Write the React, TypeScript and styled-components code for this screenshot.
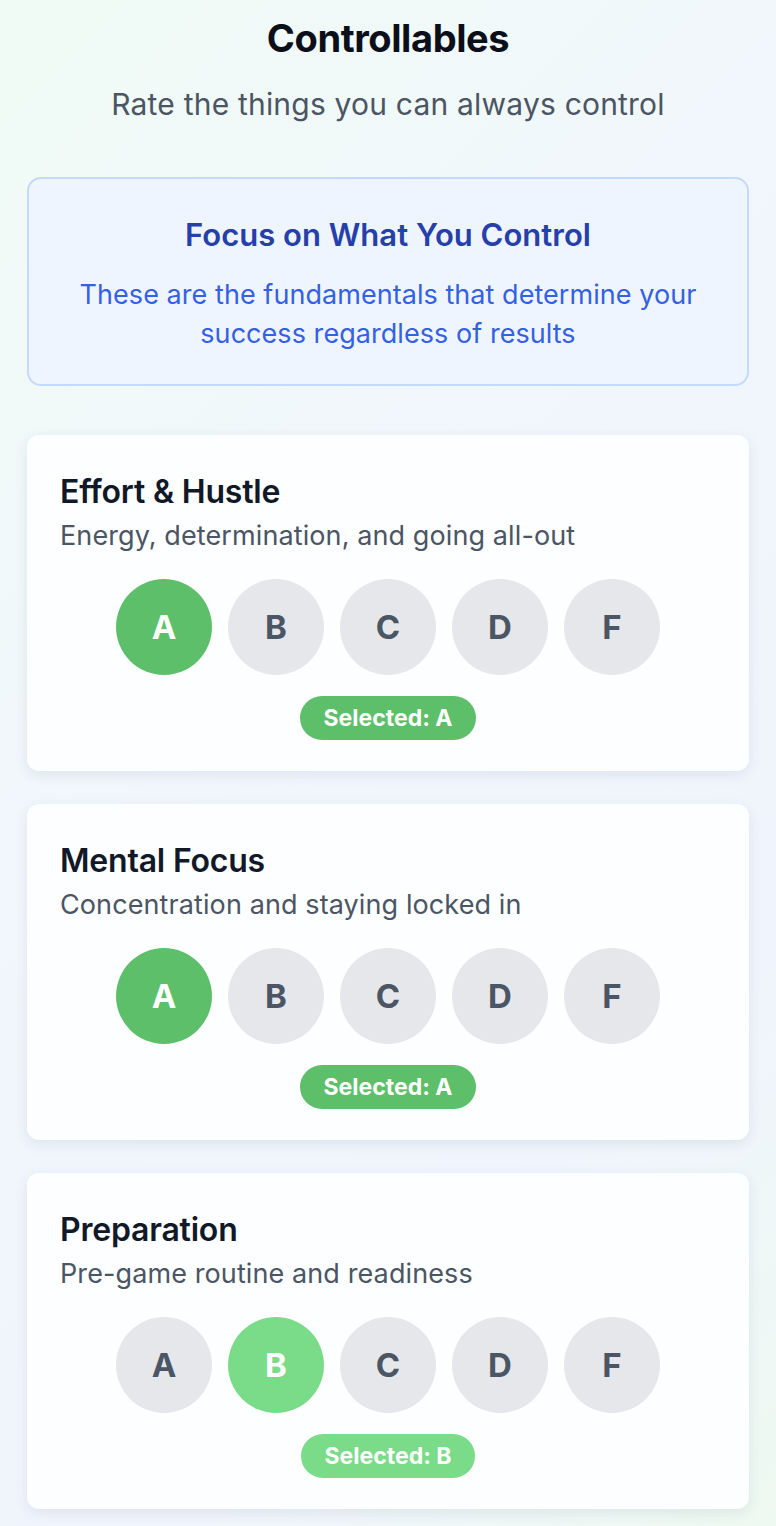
import styled, { createGlobalStyle } from "styled-components";

const GlobalStyle = createGlobalStyle`
  html, body {
    margin: 0;
    padding: 0;
  }
  body {
    font-family: Inter, "Noto Sans", "Liberation Sans", sans-serif;
    background: linear-gradient(135deg, #f0fbf5 0%, #f1f6fd 45%, #f0f5fd 75%, #eef9f1 100%);
    min-height: 100vh;
  }
`;

const Page = styled.div`
  padding: 16px 27px 16px;
  display: flex;
  flex-direction: column;
`;

const Header = styled.header`
  display: flex;
  flex-direction: column;
  align-items: center;
  margin-bottom: 53px;
`;

const Title = styled.h1`
  margin: 0;
  font-size: 38px;
  line-height: 44px;
  font-weight: 700;
  color: #0b0f1a;
  letter-spacing: -0.4px;
`;

const Subtitle = styled.p`
  margin: 24px 0 0;
  font-size: 30px;
  line-height: 40px;
  color: #4b5563;
  letter-spacing: 0.2px;
`;

const InfoBox = styled.section`
  background: #eff5fe;
  border: 2px solid #c4dafc;
  border-radius: 14px;
  padding: 32px 30px 31px;
  text-align: center;
  margin-bottom: 49px;
`;

const InfoTitle = styled.h2`
  margin: 0;
  font-size: 31px;
  line-height: 48px;
  font-weight: 600;
  color: #2540a8;
`;

const InfoText = styled.p`
  margin: 16px 0 0;
  font-size: 27px;
  line-height: 39px;
  color: #3461e3;
  letter-spacing: 0.05px;
`;

const CardList = styled.div`
  display: flex;
  flex-direction: column;
  gap: 33px;
`;

const Card = styled.section`
  background: #fdfeff;
  border-radius: 12px;
  box-shadow: 0 4px 14px rgba(30, 50, 80, 0.09);
  padding: 33px 33px 31px;
  display: flex;
  flex-direction: column;
`;

const CardTitle = styled.h3`
  margin: 0;
  font-size: 32px;
  line-height: 48px;
  font-weight: 600;
  color: #111827;
  letter-spacing: -0.2px;
`;

const CardDesc = styled.p`
  margin: 2px 0 0;
  font-size: 27px;
  line-height: 36px;
  color: #4b5563;
  letter-spacing: 0.1px;
`;

const Grades = styled.div`
  display: flex;
  justify-content: center;
  gap: 16px;
  margin-top: 25px;
`;

type Tone = "strong" | "light";

const toneColor: Record<Tone, string> = {
  strong: "#5ebf6a",
  light: "#7adb88",
};

const GradeButton = styled.button<{ $active: boolean; $tone: Tone }>`
  width: 96px;
  height: 96px;
  border-radius: 50%;
  border: none;
  padding: 0;
  font-family: inherit;
  font-size: 33px;
  font-weight: 700;
  cursor: pointer;
  background: ${(p) => (p.$active ? toneColor[p.$tone] : "#e5e7eb")};
  color: ${(p) => (p.$active ? "#ffffff" : "#4b5563")};
`;

const Badge = styled.div<{ $tone: Tone }>`
  align-self: center;
  margin-top: 21px;
  height: 44px;
  padding: 0 24px;
  border-radius: 22px;
  background: ${(p) => toneColor[p.$tone]};
  color: #fff;
  font-size: 23px;
  font-weight: 700;
  display: flex;
  align-items: center;
`;

const GRADES = ["A", "B", "C", "D", "F"];

const items: { title: string; desc: string; grade: string; tone: Tone }[] = [
  { title: "Effort & Hustle", desc: "Energy, determination, and going all-out", grade: "A", tone: "strong" },
  { title: "Mental Focus", desc: "Concentration and staying locked in", grade: "A", tone: "strong" },
  { title: "Preparation", desc: "Pre-game routine and readiness", grade: "B", tone: "light" },
];

export default function App() {
  return (
    <>
      <GlobalStyle />
      <Page>
        <Header>
          <Title>Controllables</Title>
          <Subtitle>Rate the things you can always control</Subtitle>
        </Header>

        <InfoBox>
          <InfoTitle>Focus on What You Control</InfoTitle>
          <InfoText>
            These are the fundamentals that determine your success regardless of results
          </InfoText>
        </InfoBox>

        <CardList>
          {items.map((item) => (
            <Card key={item.title}>
              <CardTitle>{item.title}</CardTitle>
              <CardDesc>{item.desc}</CardDesc>
              <Grades>
                {GRADES.map((g) => (
                  <GradeButton key={g} $active={g === item.grade} $tone={item.tone}>
                    {g}
                  </GradeButton>
                ))}
              </Grades>
              <Badge $tone={item.tone}>Selected: {item.grade}</Badge>
            </Card>
          ))}
        </CardList>
      </Page>
    </>
  );
}
